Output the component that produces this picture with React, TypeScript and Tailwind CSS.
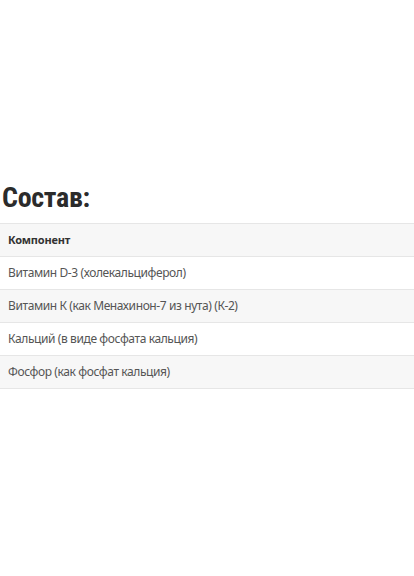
export default function App() {
  const rows = [
    "Витамин D-3 (холекальциферол)",
    "Витамин К (как Менахинон-7 из нута) (К-2)",
    "Кальций (в виде фосфата кальция)",
    "Фосфор (как фосфат кальция)",
  ];
  return (
    <div className="w-[414px] h-[576px] bg-white overflow-hidden pt-[180px]" style={{ fontFamily: '"Noto Sans", sans-serif' }}>
      <h2
        className="pl-[2px] text-[28px] leading-[36px] font-bold text-[#2b2b2b] tracking-[-0.3px] mb-[7px]"
        style={{ fontFamily: '"Roboto Condensed", "Roboto", sans-serif' }}
      >
        Состав:
      </h2>
      <table className="w-full border-collapse">
        <thead>
          <tr className="bg-[#f7f7f7] border-t border-[#e6e6e6]">
            <th className="text-left pl-[8px] h-[33px] text-[11px] font-bold text-[#333] tracking-[-0.2px]">Компонент</th>
          </tr>
        </thead>
        <tbody>
          {rows.map((r, i) => (
            <tr key={i} className={`border-t border-[#e6e6e6] ${i % 2 === 1 ? "bg-[#f7f7f7]" : "bg-white"}`}>
              <td className="pl-[8px] h-[33px] text-[12px] text-[#555] tracking-[-0.4px]">{r}</td>
            </tr>
          ))}
          <tr className="border-t border-[#e6e6e6]"><td className="h-0 p-0"></td></tr>
        </tbody>
      </table>
    </div>
  );
}
